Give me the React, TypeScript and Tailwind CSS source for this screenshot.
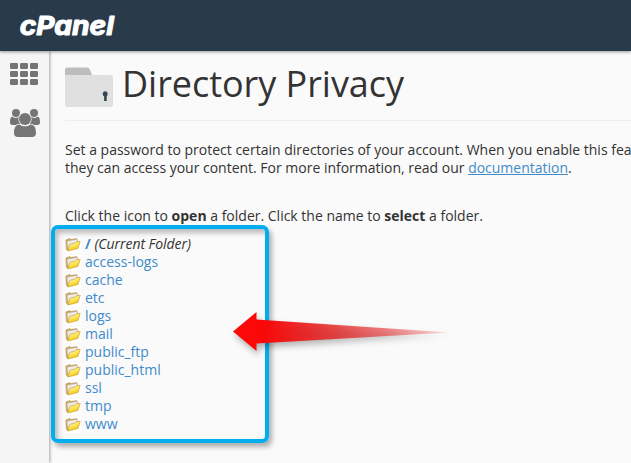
const folders = [
  "access-logs",
  "cache",
  "etc",
  "logs",
  "mail",
  "public_ftp",
  "public_html",
  "ssl",
  "tmp",
  "www",
];

const Logo = () => (
  <svg width="96" height="26" viewBox="0 0 96 26" className="overflow-visible">
    <text
      x="0.8"
      y="21.8"
      textLength="94"
      lengthAdjust="spacingAndGlyphs"
      fill="#fff"
      stroke="#fff"
      strokeWidth="1.1"
      strokeLinejoin="round"
      className="font-['Inter',sans-serif] text-[26px] font-bold italic"
    >
      cPanel
    </text>
  </svg>
);

const GridIcon = () => (
  <svg width="28" height="22" viewBox="0 0 28 22" fill="#757575">
    {[0, 8, 16].map((y) =>
      [0, 10, 20].map((x) => (
        <rect key={`${x}-${y}`} x={x} y={y} width="8" height="6" rx="1.2" />
      ))
    )}
  </svg>
);

const UsersIcon = () => (
  <svg width="30" height="28" viewBox="0 0 30 28" fill="#757575">
    <circle cx="6" cy="4" r="4" />
    <circle cx="24" cy="4" r="4" />
    <path d="M2 7.6C4 9.4 7.4 9.4 10 7.6V16H2.5C.8 16 0 15 0 13.2C0 10.8 .3 8.4 2 7.6Z" />
    <path d="M28 7.6C26 9.4 22.6 9.4 20 7.6V16H27.5C29.2 16 30 15 30 13.2C30 10.8 29.7 8.4 28 7.6Z" />
    <circle cx="15" cy="10" r="6.7" fill="#f5f5f5" />
    <circle cx="15" cy="10" r="6" />
    <path
      d="M9.4 15.4C12.5 18 17.5 18 20.6 15.4C24.5 15.4 26 19 26 24C26 26.7 24.6 28 22.2 28H7.8C5.4 28 4 26.7 4 24C4 19 5.5 15.4 9.4 15.4Z"
      stroke="#f5f5f5"
      strokeWidth="1.2"
      className="[paint-order:stroke]"
    />
  </svg>
);

const PrivacyIcon = () => (
  <svg width="48" height="40" viewBox="0 0 48 40">
    <path d="M0 10V2.5Q0 .5 2 .5H22Q24 .5 24.8 2.5L27.5 9V10Z" fill="#bdbdbd" />
    <path d="M0 8H46Q48 8 48 10V38Q48 40 46 40H2Q0 40 0 38Z" fill="#e0e0e0" />
    <path d="M37.8 27.4a2.5 2.5 0 1 1 4.8 0a2.4 2.4 0 0 1-.9 1.9V34h-2.6v-4.7a2.4 2.4 0 0 1-1.3-1.9Z" fill="#37474f" />
  </svg>
);

const FolderIcon = () => (
  <svg width="16" height="16" viewBox="0 0 16 16" className="relative top-px shrink-0">
    <defs>
      <linearGradient id="folder" x1="0" y1="0" x2=".5" y2="1">
        <stop offset="0" stopColor="#fffde0" />
        <stop offset=".4" stopColor="#fdf07c" />
        <stop offset="1" stopColor="#f6c600" />
      </linearGradient>
    </defs>
    <rect width="16" height="16" fill="#fff" />
    <path d="M.9 3L4.6 1.6L6.1 2.6L11.6 1.6L12.7 3V10L3 13.5L1.4 12.3Z" fill="#cfae68" stroke="#ab8650" strokeWidth=".6" />
    <path d="M2.2 4.4L12.4 2.4V8L3.4 11.5Z" fill="#efedeb" stroke="#cfcac4" strokeWidth=".4" />
    <path d="M5 7.2L9.8 6.1L10.8 5L15.2 4.2L12.9 11.5L2.7 14Z" fill="url(#folder)" stroke="#c2932c" strokeWidth=".6" />
  </svg>
);

const Arrow = () => (
  <svg
    width="220"
    height="44"
    viewBox="0 0 220 44"
    className="absolute left-[231px] top-[310px] drop-shadow-[2px_4px_3px_rgba(0,0,0,0.3)]"
  >
    <defs>
      <linearGradient id="arrow" gradientUnits="userSpaceOnUse" x1="2" y1="0" x2="217" y2="0">
        <stop offset="0" stopColor="#ff0808" />
        <stop offset=".14" stopColor="#fa0808" />
        <stop offset=".4" stopColor="#e51c1c" stopOpacity=".86" />
        <stop offset=".72" stopColor="#e52020" stopOpacity=".55" />
        <stop offset="1" stopColor="#f02020" stopOpacity=".15" />
      </linearGradient>
    </defs>
    <path d="M2 21.5L25.5 2V9.5L218 22.5L25.5 33.5V41Z" fill="url(#arrow)" />
  </svg>
);

const App = () => {
  return (
    <div className="relative flex h-[463px] w-[631px] flex-col overflow-hidden bg-[#fafafa] font-['Open_Sans',sans-serif] text-[14px] leading-[18px] text-[#333]">
      <header className="z-10 flex h-[51px] shrink-0 items-center bg-[#293a4a] pl-[19px] shadow-[0_1px_3px_rgba(0,0,0,0.4)]">
        <Logo />
      </header>
      <div className="flex flex-1">
        <nav className="flex w-[49px] shrink-0 flex-col items-start gap-6 bg-[#f5f5f5] pl-[10px] pt-3 shadow-[1px_0_3px_rgba(0,0,0,0.35)]">
          <GridIcon />
          <UsersIcon />
        </nav>
        <main className="min-w-0 flex-1 pl-4">
          <div className="flex h-[70px] items-start gap-[9px] border-b border-[#eee] pt-4">
            <PrivacyIcon />
            <h1 className="-mt-px text-[36px] font-normal leading-[36px] tracking-[-0.04px]">Directory Privacy</h1>
          </div>
          <p className="mt-5 whitespace-nowrap">
            Set a password to protect certain directories of your account. When you enable this fea
            <br />
            <span className="tracking-[-0.01px]">
              they can access your content. For more information, read our{" "}
              <a className="text-[#428bca] underline">documentation</a>.
            </span>
          </p>
          <p className="mt-[30px] whitespace-nowrap">
            Click the icon to <b>open</b> a folder. Click the name to <b>select</b> a folder.
          </p>
          <ul className="mt-[10px]">
            <li className="flex h-[18px] items-center gap-1">
              <FolderIcon />
              <span>
                <b className="text-[#428bca]">/</b> <i className="tracking-[-0.05px]">(Current Folder)</i>
              </span>
            </li>
            {folders.map((name) => (
              <li key={name} className="flex h-[18px] items-center gap-1">
                <FolderIcon />
                <a className="text-[#428bca]">{name}</a>
              </li>
            ))}
          </ul>
        </main>
      </div>
      <div className="absolute left-[51px] top-[225px] h-[218px] w-[218px] rounded-[7px] border-4 border-[#00aeef] shadow-[3px_4px_5px_rgba(0,0,0,0.3),inset_3px_4px_5px_rgba(0,0,0,0.25)]" />
      <Arrow />
    </div>
  );
};

export default App;
